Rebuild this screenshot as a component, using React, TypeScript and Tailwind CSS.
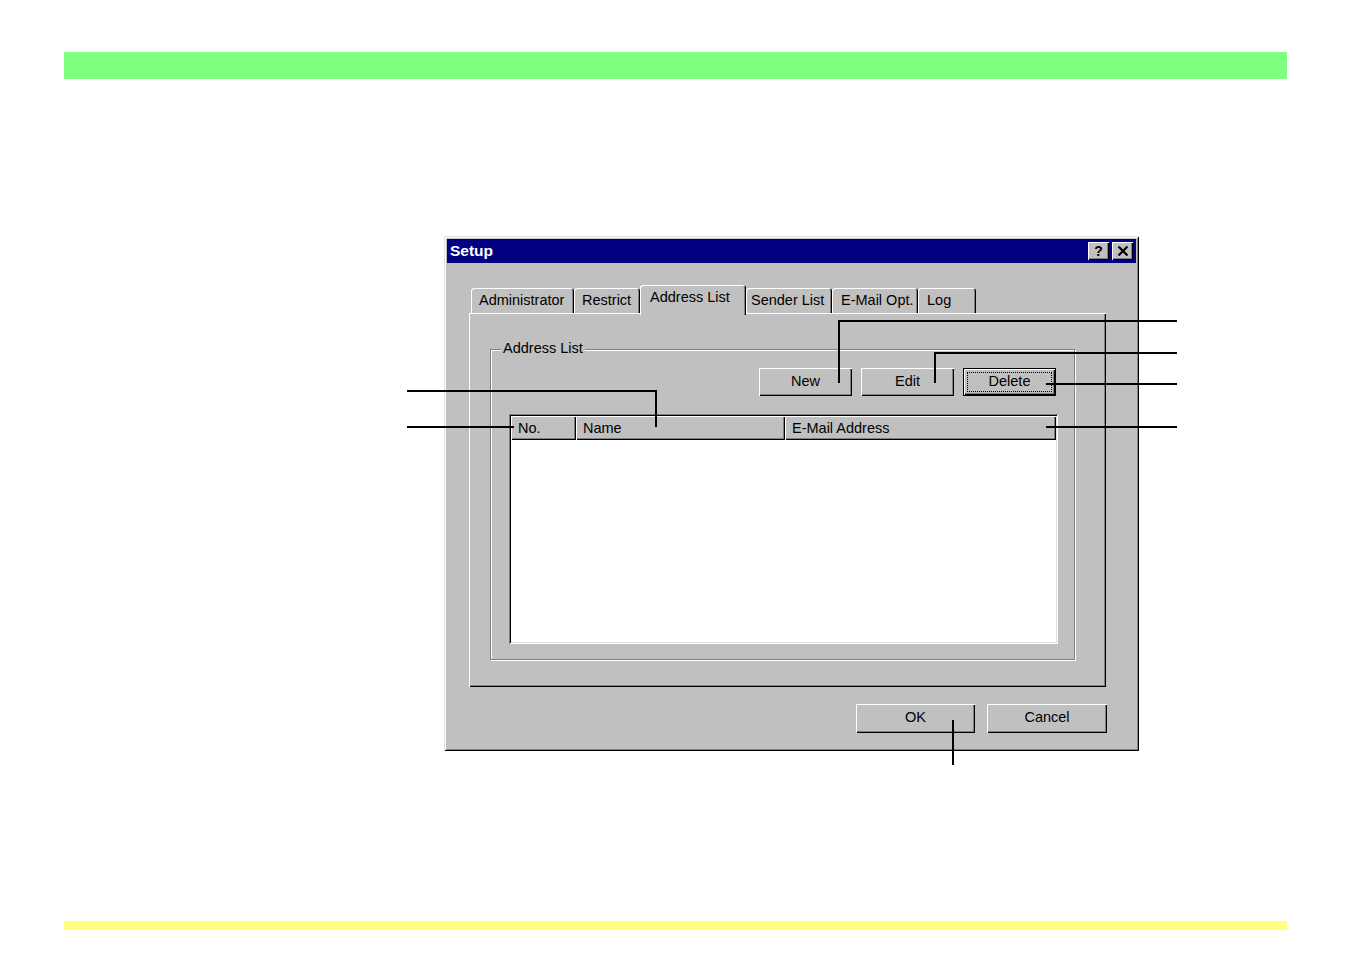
import React from "react";

const raised =
  "shadow-[inset_1px_1px_0_#fff,inset_-1px_-1px_0_#000,inset_-2px_-2px_0_#808080]";

function Btn({
  label,
  w,
  h,
  focused,
}: {
  label: string;
  w: string;
  h: string;
  focused?: boolean;
}) {
  if (focused) {
    return (
      <div className={`${w} ${h} border border-black bg-[#c0c0c0] flex`}>
        <div className={`flex-1 ${raised} flex items-center justify-center p-[3px]`}>
          <div className="w-full h-full border border-dotted border-black flex items-center justify-center pb-[1px]">
            {label}
          </div>
        </div>
      </div>
    );
  }
  return (
    <div className={`${w} ${h} bg-[#c0c0c0] ${raised} flex items-center justify-center pb-[2px]`}>
      {label}
    </div>
  );
}

function Tab({
  label,
  w,
  pl,
  selected,
}: {
  label: string;
  w: string;
  pl: string;
  selected?: boolean;
}) {
  if (selected) {
    return (
      <div
        className={`${w} ${pl} h-[30px] -mb-[2px] relative z-10 bg-[#c0c0c0] rounded-t-[3px] shadow-[inset_1px_1px_0_#fff,inset_-1px_0_0_#000,inset_-2px_0_0_#808080] flex items-start pt-[5px]`}
      >
        {label}
      </div>
    );
  }
  return (
    <div
      className={`${w} ${pl} h-[25px] bg-[#c0c0c0] rounded-t-[3px] shadow-[inset_1px_1px_0_#fff,inset_-1px_0_0_#000,inset_-2px_0_0_#808080] flex items-center`}
    >
      {label}
    </div>
  );
}

function HeaderCell({ label, w }: { label: string; w: string }) {
  return (
    <div className={`${w} h-full bg-[#c0c0c0] ${raised} flex items-center pl-[7px]`}>
      {label}
    </div>
  );
}

const lines = [
  { x: 838, y: 320, w: 339, h: 2 },
  { x: 838, y: 320, w: 2, h: 63 },
  { x: 934, y: 352, w: 243, h: 2 },
  { x: 934, y: 352, w: 2, h: 31 },
  { x: 1046, y: 383, w: 131, h: 2 },
  { x: 1046, y: 426, w: 131, h: 2 },
  { x: 407, y: 390, w: 250, h: 2 },
  { x: 655, y: 390, w: 2, h: 37 },
  { x: 407, y: 426, w: 107, h: 2 },
  { x: 952, y: 720, w: 2, h: 45 },
];

export default function App() {
  return (
    <div
      className="relative w-[1352px] h-[954px] bg-white overflow-hidden text-black text-[14.5px] leading-none"
      style={{ fontFamily: '"Liberation Sans", Arial, sans-serif' }}
    >
      <div className="pt-[52px]">
        <div className="ml-[64px] w-[1223px] h-[27px] bg-[#80ff80]" />

        {/* Dialog */}
        <div className="mt-[157px] ml-[444px] w-[695px] h-[515px] bg-[#c0c0c0] shadow-[inset_1px_1px_0_#dfdfdf,inset_-1px_-1px_0_#000,inset_2px_2px_0_#fff,inset_-2px_-2px_0_#808080] p-[3px] flex flex-col">
          {/* Title bar */}
          <div className="h-[24px] bg-[#000080] flex items-center justify-between pl-[3px] pr-[3px]">
            <span className="text-white font-bold text-[15.5px]">Setup</span>
            <div className="flex gap-[3px]">
              <div className={`w-[21px] h-[18px] bg-[#c0c0c0] ${raised} flex items-center justify-center font-bold text-[14px] pb-[1px]`}>
                ?
              </div>
              <div className={`w-[21px] h-[18px] bg-[#c0c0c0] ${raised} flex items-center justify-center`}>
                <svg width="12" height="10" viewBox="0 0 12 10">
                  <path d="M1.5 0.5 L10.5 9.5 M10.5 0.5 L1.5 9.5" stroke="#000" strokeWidth="2.2" />
                </svg>
              </div>
            </div>
          </div>

          {/* Body */}
          <div className="pl-[22px] pt-[21px]">
            <div className="flex items-end pl-[2px] h-[29px]">
              <Tab label="Administrator" w="w-[103px]" pl="pl-[8px]" />
              <Tab label="Restrict" w="w-[66px]" pl="pl-[8px]" />
              <Tab label="Address List" w="w-[106px]" pl="pl-[10px]" selected />
              <Tab label="Sender List" w="w-[86px]" pl="pl-[5px]" />
              <Tab label="E-Mail Opt." w="w-[86px]" pl="pl-[9px]" />
              <Tab label="Log" w="w-[58px]" pl="pl-[9px]" />
            </div>

            {/* Panel */}
            <div className={`w-[637px] h-[374px] bg-[#c0c0c0] ${raised} pt-[36px] pl-[21px]`}>
              <div className="relative w-[585px] h-[311px] border border-[#808080] shadow-[inset_1px_1px_0_#fff,1px_1px_0_#fff] pt-[18px] pl-[18px]">
                <div className="absolute -top-[9px] left-[10px] bg-[#c0c0c0] px-[2px]">
                  Address List
                </div>
                <div className="flex justify-end gap-[9px] pr-[18px]">
                  <Btn label="New" w="w-[93px]" h="h-[28px]" />
                  <Btn label="Edit" w="w-[93px]" h="h-[28px]" />
                  <Btn label="Delete" w="w-[93px]" h="h-[28px]" focused />
                </div>
                <div className="mt-[18px] w-[549px] h-[230px] bg-white shadow-[inset_1px_1px_0_#808080,inset_-1px_-1px_0_#fff,inset_2px_2px_0_#000,inset_-2px_-2px_0_#dfdfdf] p-[2px]">
                  <div className="flex h-[24px]">
                    <HeaderCell label="No." w="w-[65px]" />
                    <HeaderCell label="Name" w="w-[209px]" />
                    <HeaderCell label="E-Mail Address" w="w-[271px]" />
                  </div>
                </div>
              </div>
            </div>

            {/* Bottom buttons */}
            <div className="w-[638px] mt-[17px] flex justify-end gap-[12px]">
              <Btn label="OK" w="w-[119px]" h="h-[29px]" />
              <Btn label="Cancel" w="w-[120px]" h="h-[29px]" />
            </div>
          </div>
        </div>

        <div className="mt-[170px] ml-[64px] w-[1223px] h-[9px] bg-[#ffff80]" />
      </div>

      {lines.map((l, i) => (
        <div
          key={i}
          className="absolute bg-black"
          style={{ left: l.x, top: l.y, width: l.w, height: l.h }}
        />
      ))}
    </div>
  );
}
